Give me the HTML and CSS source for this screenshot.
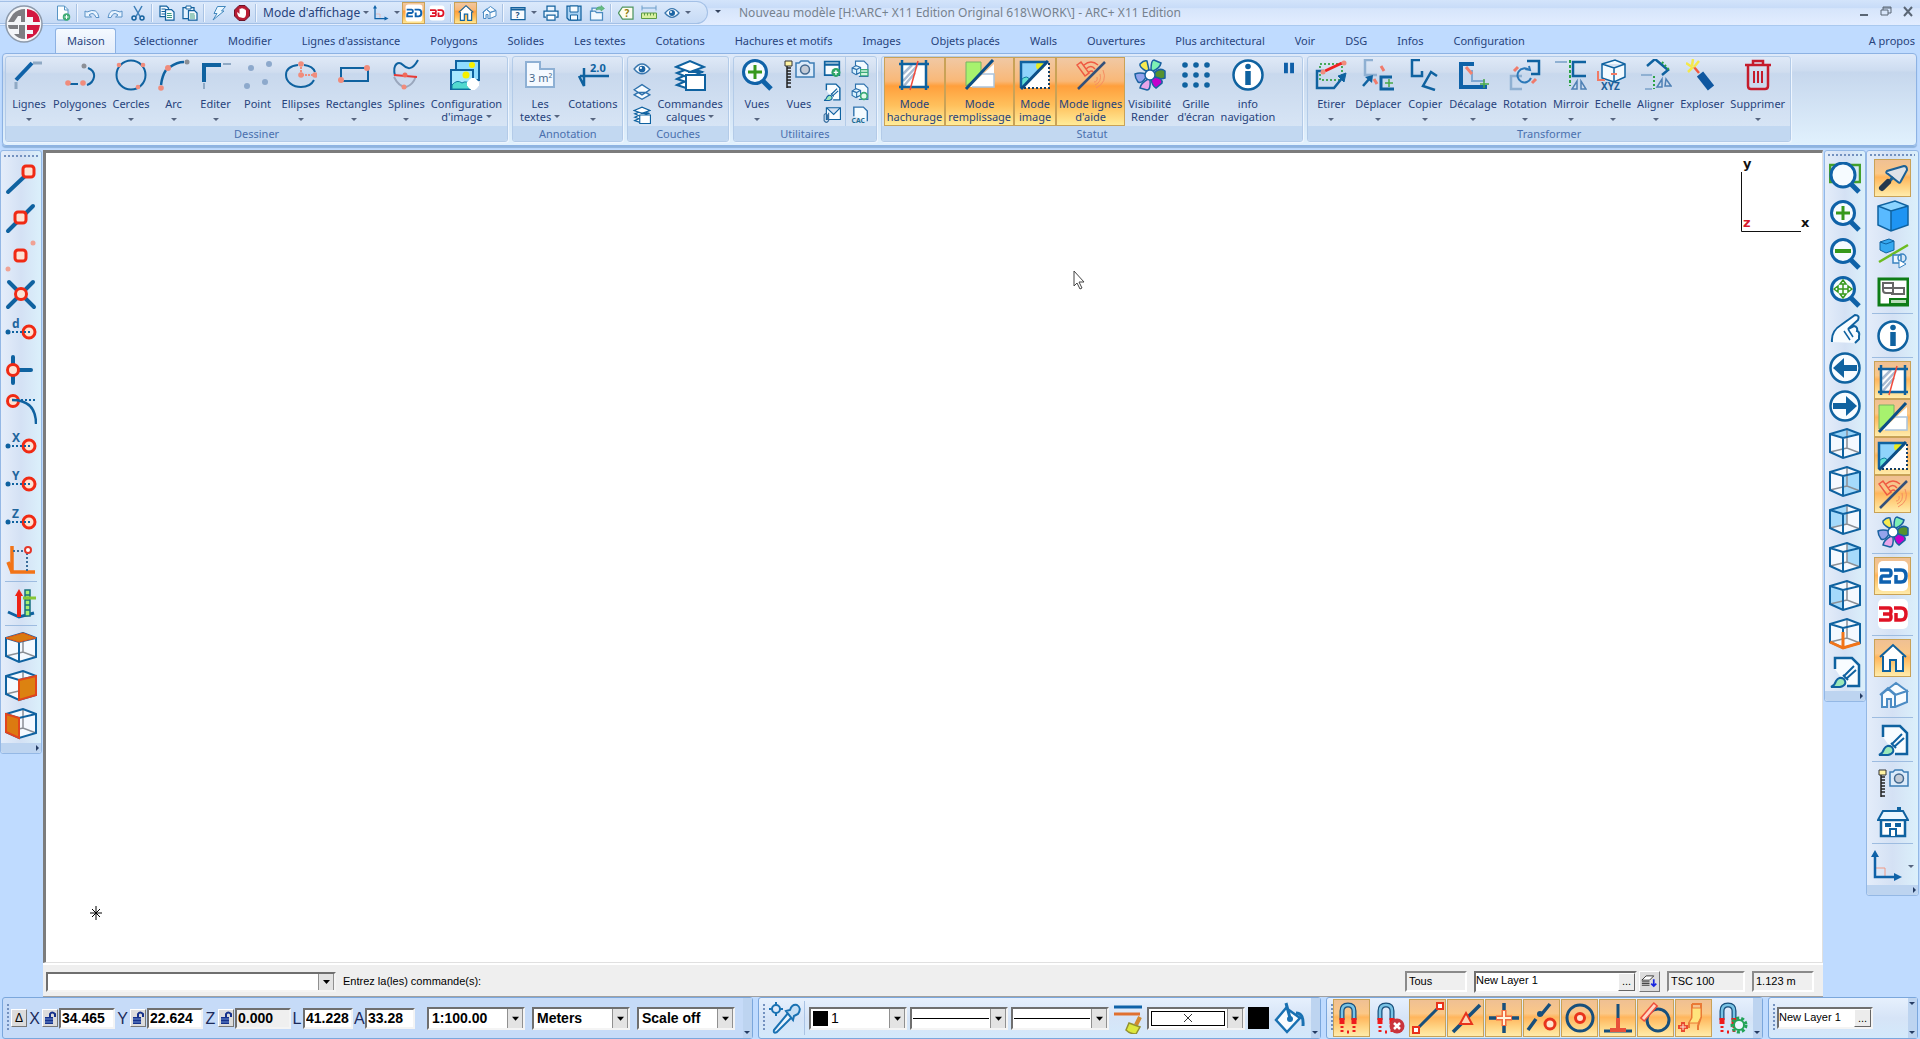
FILE: index.html
```html
<!DOCTYPE html>
<html lang="fr">
<head>
<meta charset="utf-8">
<title>Nouveau modèle - ARC+ X11 Edition</title>
<link rel="stylesheet" href="styles.css">
</head>
<body>
<svg class="sprite" aria-hidden="true">
  <!-- drawing -->
  <symbol id="i-line" viewBox="0 0 32 32"><path d="M3 21 19 4" stroke="#0f62a8" stroke-width="4"/><path d="M20 4h9M3 23v7" stroke="#8fa9c4" stroke-width="3"/></symbol>
  <symbol id="i-poly" viewBox="0 0 32 32"><path d="M6 25h8m10-16q7 3 6 9t-7 8" stroke="#0f62a0" stroke-width="2"/><circle cx="20" cy="7" r="2.500" fill="#8b8f96"/><g fill="#f08c7c"><circle cx="4" cy="24" r="2.800"/><circle cx="19" cy="24" r="2.800"/></g></symbol>
  <symbol id="i-circle" viewBox="0 0 32 32"><circle cx="16" cy="16" r="14.500" stroke="#0f62a0" stroke-width="2"/><g fill="#f08c7c"><circle cx="4" cy="6" r="2.300"/><circle cx="28" cy="6" r="2.300"/><circle cx="23" cy="28" r="2.300"/></g></symbol>
  <symbol id="i-arc" viewBox="0 0 32 32"><path d="M3 26q1-9 5-15m4-3q7-5 14-5" stroke="#0f62a0" stroke-width="2.500"/><circle cx="29" cy="3" r="2.500" fill="#8b8f96"/><g fill="#f08c7c"><circle cx="3" cy="29" r="2.800"/><circle cx="10" cy="9" r="3"/></g></symbol>
  <symbol id="i-edit" viewBox="0 0 32 32"><path d="M4 23V6h17" stroke="#0f62a0" stroke-width="4"/><path d="M23 5h8M4 24v6" stroke="#8fa9c4" stroke-width="2"/></symbol>
  <symbol id="i-point" viewBox="0 0 32 32"><g fill="#8da9cc"><circle cx="9" cy="9" r="3"/><circle cx="27" cy="5" r="3"/><circle cx="5" cy="27" r="3"/><circle cx="23" cy="23" r="3"/></g></symbol>
  <symbol id="i-ellipse" viewBox="0 0 32 32"><path d="M13 6C5 7 1 11 1 16c0 7 7 12 15 12 6 0 11-3 13-7M19 6q9 1 11 7" stroke="#0f62a0" stroke-width="2"/><path d="M16 5v11h13" stroke="#f08c7c" stroke-width="2" stroke-dasharray="2 1"/><g fill="#f08c7c"><circle cx="16" cy="5" r="2.800"/><circle cx="16" cy="16" r="2.800"/><circle cx="30" cy="16" r="2.800"/></g></symbol>
  <symbol id="i-rect" viewBox="0 0 32 32"><path d="M3 9h27v13H3z" stroke="#0f62a0" stroke-width="2"/><g fill="#f08c7c"><circle cx="29" cy="9" r="3"/><circle cx="3" cy="21" r="3"/></g></symbol>
  <symbol id="i-spline" viewBox="0 0 32 32"><path d="M5 17C2 4 9 2 13 6s9 6 15-5" stroke="#0f62a0" stroke-width="2"/><path d="M4 18q5 10 12 10 7-2 10-11" stroke="#9aa7bd" stroke-width="2"/><path d="M4 16l23 2" stroke="#e83a35" stroke-width="2"/><circle cx="15" cy="16" r="2.500" fill="#f06a5a"/><circle cx="14" cy="28" r="2.500" fill="#f08c7c"/></symbol>
  <symbol id="i-image" viewBox="0 0 32 32"><path d="M6 2h23v19H6z" fill="#8fdcff" stroke="#0f62a0" stroke-width="2"/><circle cx="22" cy="6" r="3" fill="#f6f000"/><path d="M1 11h22v19H1z" fill="#a6e8ff" stroke="#0f62a0" stroke-width="2"/><circle cx="16" cy="16" r="3.500" fill="#f6f000"/><path d="M2 26q5-6 10-2 4-3 10 2v4H2z" fill="#52d9cf" stroke="#0f7ca0"/><path d="M23 19v12M17 25h12M19 21l8 8m0-8-8 8" stroke="#fff" stroke-width="4"/></symbol>
  <!-- annotation and layers -->
  <symbol id="i-area" viewBox="0 0 32 32"><path d="M2 3h14v7h14v18H2z" fill="#f4f9ff" stroke="#8eb0d4" stroke-width="2"/><text x="5" y="23" font-size="11" fill="#49698d" stroke="none">3 m²</text></symbol>
  <symbol id="i-dim" viewBox="0 0 32 32"><path d="M3 17h29M7 9v18L2 17M7 27V17" stroke="#0f62a0" stroke-width="2.500"/><text x="13" y="13" font-size="11" font-weight="bold" fill="#0f62a0" stroke="none">2.0</text></symbol>
  <symbol id="i-layers" viewBox="0 0 32 32"><g fill="#fff" stroke="#0f62a0" stroke-width="2"><path d="M3 26l13-6 13 5-14 5z"/><path d="M3 20l13-6 12 5-13 5z"/><path d="M3 14l13-5 12 4-13 6z"/><path d="M2 8 16 2l14 6-14 5z"/><path d="M12 16h19v15H12z"/><path d="M14 13h15" /></g></symbol>
  <symbol id="i-eye" viewBox="0 0 32 32"><path d="M2 16q14-18 28 0-14 17-28 0z" fill="#f6fbff" stroke="#3a77ae" stroke-width="2.500"/><circle cx="16" cy="16" r="6" fill="#1c64a4"/><circle cx="14" cy="14" r="2" fill="#fff"/></symbol>
  <symbol id="i-layer2" viewBox="0 0 32 32"><path d="M2 21l7-4h14l7 4-14 8zM2 12l14-9 14 9-14 9z" fill="#f6fbff" stroke="#2f72ad" stroke-width="2.500"/></symbol>
  <symbol id="i-brushpage" viewBox="0 0 32 32"><path d="M6 13V2h17l7 7v21H18" fill="#f8fcff" stroke="#0f62a0" stroke-width="2.500"/><path d="M15 20 25 10m-8 13 10-9M14 19l5 5" stroke="#0f62a0" stroke-width="2"/><path d="M2 31q4-2 5-6 3-5 8-2 4 6-4 8z" fill="#9be8b8" stroke="#0f62a0" stroke-width="2"/></symbol>
  <symbol id="i-zin" viewBox="0 0 32 32"><path d="M21 21l9 9" stroke="#0f62a8" stroke-width="5"/><circle cx="14" cy="13" r="11.500" fill="#f6fbff" stroke="#0f62a8" stroke-width="3"/><path d="M7 13h14M14 6v14" stroke="#36981c" stroke-width="3"/></symbol>
  <symbol id="i-zout" viewBox="0 0 32 32"><path d="M21 21l9 9" stroke="#0f62a8" stroke-width="5"/><circle cx="14" cy="13" r="11.500" fill="#f6fbff" stroke="#0f62a8" stroke-width="3"/><path d="M6 13h16" stroke="#36981c" stroke-width="4"/></symbol>
  <symbol id="i-zwin" viewBox="0 0 32 32"><path d="M1 3h30v17H1z" stroke="#42a02c" stroke-width="2.500"/><path d="M21 21l9 9" stroke="#0f62a8" stroke-width="5"/><circle cx="14" cy="13" r="12" fill="#f6fbff" stroke="#0f62a8" stroke-width="3"/></symbol>
  <symbol id="i-zall" viewBox="0 0 32 32"><path d="M21 21l9 9" stroke="#0f62a8" stroke-width="5"/><circle cx="14" cy="13" r="11.500" fill="#f6fbff" stroke="#0f62a8" stroke-width="3"/><path d="M14 4l3 4h-6zM14 22l3-4h-6zM5 13l4-3v6zM23 13l-4-3v6zM14 8v10M9 13h10" stroke="#36981c" stroke-width="1.500"/></symbol>
  <symbol id="i-cam" viewBox="0 0 32 32"><path d="M4 7v22M4 9h4M4 12h4M4 15h4M4 18h4M4 21h4M4 24h4M4 28h4" stroke="#222" stroke-width="1.500"/><path d="M2 2h7v5H2z" fill="#fff3a2" stroke="#333"/><path d="M13 4h3l2-2h7l2 2h4v14H13z" fill="#dcebfa" stroke="#3d7db5" stroke-width="1.500"/><circle cx="22" cy="10.500" r="4.500" fill="#c3cbd6" stroke="#44698f" stroke-width="1.500"/></symbol>
  <symbol id="i-winadd" viewBox="0 0 32 32"><path d="M3 3h26v24H3z" fill="#f8fcff" stroke="#0f62a0" stroke-width="3"/><path d="M3 8h26" stroke="#0f62a0" stroke-width="4"/><circle cx="23" cy="22" r="8" fill="#2ba465"/><path d="M23 18v8m-4-4h8" stroke="#fff" stroke-width="2.500"/></symbol>
  <symbol id="i-mail" viewBox="0 0 32 32"><path d="M6 3h25v21H6zM6 3l13 12L31 3" fill="#f8fcff" stroke="#0f62a0" stroke-width="2"/><path d="M10 12v14q-4 6-8 0V16q3-5 6 0v9" stroke="#3a6f9f" stroke-width="2"/></symbol>
  <symbol id="i-cubedoc" viewBox="0 0 32 32"><path d="M8 12V2h15l7 7v20H14" fill="#f3fbff" stroke="#2f72ad" stroke-width="2"/><path d="M2 14l7-4 8 3v9l-8 4-7-4zM2 14l8 3 7-4M10 17v9" fill="#d9f2ff" stroke="#2f72ad" stroke-width="2"/><path d="M17 17h13v11H17zM17 22h13" fill="#d4f5df" stroke="#3cab7a" stroke-width="2"/></symbol>
  <symbol id="i-cubegear" viewBox="0 0 32 32"><path d="M8 12V2h15l7 7v20H14" fill="#f3fbff" stroke="#2f72ad" stroke-width="2"/><path d="M2 14l7-4 8 3v9l-8 4-7-4zM2 14l8 3 7-4M10 17v9" fill="#d9f2ff" stroke="#2f72ad" stroke-width="2"/><circle cx="23" cy="23" r="6" fill="#e4f9ec" stroke="#3cab7a" stroke-width="3"/></symbol>
  <symbol id="i-cac" viewBox="0 0 32 32"><path d="M5 18V2h17l7 7v18" fill="#f3fbff" stroke="#2f72ad" stroke-width="2.500"/><text x="1" y="30" font-size="12" font-weight="bold" fill="#1f6c93" stroke="none">CAC</text></symbol>
  <!-- display states -->
  <symbol id="i-hatch" viewBox="0 0 32 32"><path d="M4 5h24v23H4z" fill="#fff"/><path d="M5 15 14 6M5 22 19 7M5 28 17 14" stroke="#a9bbd2" stroke-width="2.500"/><path d="M4 1v30M28 1v30M1 5h30M1 28h30" stroke="#0f62a0" stroke-width="2.500"/><path d="M20 2 12 31" stroke="#f04a3c" stroke-width="1.500"/></symbol>
  <symbol id="i-fill" viewBox="0 0 32 32"><path d="M2 3h15v12L2 27z" fill="#a7f26e" stroke="#77b264"/><path d="M30 5v23H5z" fill="#fff"/><path d="M15 15h15v13H8" stroke="#aac4dd" stroke-width="1.500"/><path d="M2 30 29 1" stroke="#0b4f88" stroke-width="3"/></symbol>
  <symbol id="i-imgmode" viewBox="0 0 32 32"><path d="M2 3h26L2 29z" fill="#8fd4fb"/><path d="M30 3v26H4z" fill="#fff"/><circle cx="21" cy="7" r="4" fill="#e8ec22"/><path d="M2 21q6-6 9 0l-9 8z" fill="#63e2d4" stroke="#0f7ca0"/><path d="M28 3H2v26" stroke="#0f62a0" stroke-width="2.500"/><path d="M30 4v25H4" stroke="#123f66" stroke-width="2" stroke-dasharray="2 2"/><path d="M2 30 29 2" stroke="#0b4f88" stroke-width="3"/></symbol>
  <symbol id="i-guide" viewBox="0 0 32 32"><g stroke="#ef5a42" stroke-width="1.500"><path d="M2 6l4-3 8 11-4 3zM9 6q7-6 14 0M11 10q5-5 9 0M14 13q3-2 4 0"/></g><g stroke="#f58d61"><path d="M28 11q5 12-7 18M25 15q2 8-5 11M22 18q1 5-3 5"/></g><path d="M3 30 30 3" stroke="#33507a" stroke-width="2.500"/></symbol>
  <symbol id="i-fan" viewBox="0 0 32 32"><g stroke="#1a62a0" stroke-width="1.500"><path d="M12 12Q5 8 6 5q4-4 7-3l2 9z" fill="#f7ea50"/><path d="M17 11q0-10 3-10l7 3q-1 5-8 8z" fill="#7df0b4"/><path d="M20 14q6-6 11-2v7q-5 2-11-2z" fill="#56922e"/><path d="M20 18q9 1 8 6l-6 5q-4-2-5-9z" fill="#c400cc"/><path d="M16 20q1 11-3 11l-7-2q1-5 8-9z" fill="#e8a5e8"/><path d="M12 18q-4 7-8 5-3-4-3-8 5-2 11 0z" fill="#93a3ec"/><circle cx="16" cy="16" r="5" fill="#fff"/></g></symbol>
  <symbol id="i-grid" viewBox="0 0 32 32"><g fill="#0f62a0"><circle cx="5" cy="6" r="2.800"/><circle cx="16" cy="6" r="2.800"/><circle cx="27" cy="6" r="2.800"/><circle cx="5" cy="16" r="2.800"/><circle cx="16" cy="16" r="2.800"/><circle cx="27" cy="16" r="2.800"/><circle cx="5" cy="26" r="2.800"/><circle cx="16" cy="26" r="2.800"/><circle cx="27" cy="26" r="2.800"/></g></symbol>
  <symbol id="i-info" viewBox="0 0 32 32"><circle cx="16" cy="16" r="14.500" fill="#fff" stroke="#0f62a0" stroke-width="2.500"/><circle cx="16" cy="7.500" r="2.800" fill="#0f62a0"/><path d="M16 12v14" stroke="#0f62a0" stroke-width="5.500"/></symbol>
  <symbol id="i-pause" viewBox="0 0 32 32"><path d="M9 4v24M23 4v24" stroke="#0f5fa8" stroke-width="9"/></symbol>
  <!-- transforms -->
  <symbol id="i-stretch" viewBox="0 0 32 32"><path d="M5 5h22v16H5z" stroke="#48a95c" stroke-width="2" stroke-dasharray="2 2"/><path d="M9 12H2v17h17l9-11" stroke="#0f62a0" stroke-width="2.500"/><path d="M31 14l-2 9-6-6z" fill="#0f62a0" stroke="#0f62a0"/><path d="M10 12 27 4" stroke="#f02020" stroke-width="3"/><g fill="#f08c7c"><circle cx="8" cy="13" r="2.500"/><circle cx="29" cy="4" r="2.500"/></g></symbol>
  <symbol id="i-move" viewBox="0 0 32 32"><path d="M11 1H3v15h12" stroke="#8fb0d2" stroke-width="2.500"/><path d="M30 18H19v12h13" stroke="#0f62a0" stroke-width="3"/><path d="M1 27l7-8" stroke="#0f62a0" stroke-width="2.500"/><path d="M3 18l8-2-1 8z" fill="#0f62a0"/><path d="M19 7l3 5M12 20l3 5" stroke="#f07b6c" stroke-width="3"/><path d="M27 20v8m-4-4h8" stroke="#48a948" stroke-width="1.500"/></symbol>
  <symbol id="i-copy2" viewBox="0 0 32 32"><path d="M11 1H3v16h10v-5M28 17l-6-4-8 14 12 4" stroke="#0f62a0" stroke-width="2.500"/></symbol>
  <symbol id="i-offset" viewBox="0 0 32 32"><path d="M17 5H4v23h26" stroke="#0f62a8" stroke-width="4"/><path d="M15 11v11h13" stroke="#7fa7d2" stroke-width="2"/><path d="M9 8l6 7" stroke="#f3826f" stroke-width="3"/><path d="M27 20v9m-4-4h9" stroke="#48a948" stroke-width="1.500"/></symbol>
  <symbol id="i-rotate" viewBox="0 0 32 32"><path d="M18 2h12v13h-8" stroke="#0f62a0" stroke-width="2.500"/><path d="M13 17H2v13h11" stroke="#8fb0d2" stroke-width="2.500"/><path d="M20 11a7 7 0 1 0 2 8M16 10l5 1-1-4" stroke="#2b78b8" stroke-width="2"/><path d="M9 8 5 12M27 20l-4 4" stroke="#f07b6c" stroke-width="3"/></symbol>
  <symbol id="i-mirror" viewBox="0 0 32 32"><path d="M0 3h12" stroke="#8fb0d2" stroke-width="2"/><path d="M31 3H18v14h13" stroke="#0f62a0" stroke-width="2.500"/><path d="M15 1v26" stroke="#2ba443" stroke-width="2" stroke-dasharray="3 2"/><path d="M22 22v8h-5zM26 22v8h5z" stroke="#4f81b5" stroke-width="1.500"/></symbol>
  <symbol id="i-scale" viewBox="0 0 32 32"><path d="M5 5l13-4 10 4v13l-11 5-12-4zM5 5l12 4 11-4M17 9v14" fill="#f3faff" stroke="#0f62a0" stroke-width="1.500"/><path d="M1 12v9h7M14 15h6" stroke="#f17a65" stroke-width="2"/><text x="4" y="31" font-size="10" font-weight="bold" fill="#1d5f99" stroke="none">XYZ</text></symbol>
  <symbol id="i-align" viewBox="0 0 32 32"><path d="M7 7l8-7 13 11-6 5" stroke="#0f62a0" stroke-width="2.500"/><path d="M1 16h11M12 30H5" stroke="#8fb0d2" stroke-width="2"/><path d="M22 3l8 9M14 17v13" stroke="#2ba443" stroke-width="2" stroke-dasharray="2 2"/><path d="M22 20v8h-5zM26 20l-1 7h6z" stroke="#4f81b5" stroke-width="1.500"/></symbol>
  <symbol id="i-explode" viewBox="0 0 32 32"><path d="M14 15 25 29" stroke="#0f57a0" stroke-width="8"/><path d="M8 8l5 6" stroke="#f2573e" stroke-width="2.500"/><path d="M7 0l-1 7M0 4l6 4M13 2 8 8M2 13l5-5" stroke="#f4e84a" stroke-width="2.500"/></symbol>
  <symbol id="i-trash" viewBox="0 0 32 32"><path d="M3 6h26M11 5V2h10v3M6 7v20q0 3 3 3h14q3 0 3-3V7" stroke="#c51c2c" stroke-width="2.500"/><path d="M12 12v12M16 12v12M20 12v12" stroke="#c51c2c" stroke-width="2"/></symbol>
  <!-- snaps -->
  <symbol id="i-endpt" viewBox="0 0 32 32"><path d="M3 28 20 12" stroke="#0f62a0" stroke-width="4" stroke-linecap="round"/><rect x="18" y="2" width="11" height="11" rx="3" fill="#fde3d4" stroke="#f02a14" stroke-width="3"/></symbol>
  <symbol id="i-midpt" viewBox="0 0 32 32"><path d="M3 29 28 4" stroke="#0f62a0" stroke-width="4" stroke-linecap="round"/><rect x="10" y="10" width="11" height="11" rx="3" fill="#fde3d4" stroke="#f02a14" stroke-width="3"/></symbol>
  <symbol id="i-between" viewBox="0 0 32 32"><g fill="#f0a294"><circle cx="28" cy="3" r="2.500"/><circle cx="3" cy="29" r="2.500"/></g><rect x="10" y="10" width="11" height="11" rx="3" fill="#fde3d4" stroke="#f02a14" stroke-width="3"/></symbol>
  <symbol id="i-cross" viewBox="0 0 32 32"><path d="M3 29 28 4M4 4l25 25" stroke="#0f62a0" stroke-width="4" stroke-linecap="round"/><circle cx="16" cy="16" r="5.500" fill="#fde3d4" stroke="#f02a14" stroke-width="3"/></symbol>
  <symbol id="i-dot" viewBox="0 0 32 32"><circle cx="3" cy="16" r="2.500" fill="#0f62a0"/><circle cx="24" cy="16" r="6" fill="#fde3d4" stroke="#f02a14" stroke-width="3"/><path d="M7 16h18" stroke="#0f62a0" stroke-width="2" stroke-dasharray="2 2"/></symbol>
  <symbol id="i-tee" viewBox="0 0 32 32"><path d="M8 3v26M8 16h18" stroke="#0f62a0" stroke-width="4" stroke-linecap="round"/><circle cx="8" cy="16" r="5.500" fill="#fde3d4" stroke="#f02a14" stroke-width="3"/></symbol>
  <symbol id="i-tanarc" viewBox="0 0 32 32"><circle cx="8" cy="9" r="5.500" fill="#fde3d4" stroke="#f02a14" stroke-width="3"/><path d="M7 8q24 0 24 24" stroke="#0f62a0" stroke-width="2.500"/><path d="M8 8h22" stroke="#0f62a0" stroke-width="2" stroke-dasharray="2 2"/></symbol>
  <symbol id="i-axis" viewBox="0 0 32 32"><path d="M7 2v26h23M7 28 3 18" stroke="#f27418" stroke-width="3.500"/><path d="M8 7h14v20" stroke="#3c6d9b" stroke-width="2" stroke-dasharray="2 2"/><circle cx="23" cy="6" r="3" fill="#fff" stroke="#e4372a" stroke-width="2"/></symbol>
  <symbol id="i-height" viewBox="0 0 32 32"><path d="M3 24l11 5 15-4" stroke="#0f62a0" stroke-width="3"/><path d="M14 29V6" stroke="#ee2216" stroke-width="4"/><path d="M14 1l4 7h-8z" fill="#ee2216"/><path d="M20 2h5v26h-5zM20 7h5m-5 5h5m-5 5h5m-5 5h5" fill="#a9ee70" stroke="#17707f" stroke-width="1.500"/><path d="M18 10h13" stroke="#86c735" stroke-width="3"/></symbol>
  <!-- cubes: frame plus one tinted face -->
  <symbol id="i-cube" viewBox="0 0 32 32"><path d="M18 1v19M1 24l17-4 13 5" stroke="#8a8f96" stroke-width="1.500"/><path d="M1 6v18l13 6 17-5V6M1 6l13 4 17-4L18 1zM14 10v20" stroke="#0f62a0" stroke-width="2"/></symbol>
  <symbol id="i-cubewhite" viewBox="0 0 32 32"><path d="M1 6 18 1l13 5v19l-17 5-13-6z" fill="#f4f9ff"/></symbol>
  <symbol id="i-ctopo" viewBox="0 0 32 32"><use href="#i-cubewhite"/><use href="#i-cube"/><path d="M1 6l13 4 17-4L18 1z" fill="#d97a10" stroke="#e2551d"/></symbol>
  <symbol id="i-cfronto" viewBox="0 0 32 32"><use href="#i-cubewhite"/><use href="#i-cube"/><path d="M14 10l17-4v19l-17 5z" fill="#dc8211" stroke="#e2451d" stroke-width="2"/></symbol>
  <symbol id="i-clefto" viewBox="0 0 32 32"><use href="#i-cubewhite"/><use href="#i-cube"/><path d="M1 6l13 4v20L1 24z" fill="#dc7a11" stroke="#e2451d" stroke-width="2"/></symbol>
  <symbol id="i-ctop" viewBox="0 0 32 32"><use href="#i-cubewhite"/><path d="M1 6l13 4 17-4L18 1z" fill="#9bd6fa"/><use href="#i-cube"/></symbol>
  <symbol id="i-cfront" viewBox="0 0 32 32"><use href="#i-cubewhite"/><path d="M14 10l17-4v19l-17 5z" fill="#a5dafb"/><use href="#i-cube"/></symbol>
  <symbol id="i-cback" viewBox="0 0 32 32"><use href="#i-cubewhite"/><path d="M1 6l17-5v19L1 24z" fill="#a5dafb"/><use href="#i-cube"/></symbol>
  <symbol id="i-cright" viewBox="0 0 32 32"><use href="#i-cubewhite"/><path d="M18 1l13 5v19l-13-5z" fill="#a5dafb"/><use href="#i-cube"/></symbol>
  <symbol id="i-cleft" viewBox="0 0 32 32"><use href="#i-cubewhite"/><path d="M1 6l13 4v20L1 24z" fill="#a5dafb"/><use href="#i-cube"/></symbol>
  <symbol id="i-caxis" viewBox="0 0 32 32"><use href="#i-cubewhite"/><use href="#i-cube"/><path d="M1 24l13 6 17-5M14 30V14" stroke="#f27418" stroke-width="3"/></symbol>
  <symbol id="i-hand" viewBox="0 0 32 32"><path d="M3 28Q2 17 12 11L26 1q5 0 3 5L19 15l6-3q4 1 3 5 3 1 2 5v3l-4 4" fill="#f8fcff" stroke="#0f62a0" stroke-width="2"/><path d="M19 15l5 8M15 17l6 9" stroke="#0f62a0" stroke-width="1.500"/></symbol>
  <symbol id="i-back" viewBox="0 0 32 32"><circle cx="16" cy="16" r="14.500" fill="#f8fcff" stroke="#0f62a0" stroke-width="2.500"/><path d="M12 16h16" stroke="#0f62a0" stroke-width="6"/><path d="M4 16 15 6v20z" fill="#0f62a0"/></symbol>
  <symbol id="i-fwd" viewBox="0 0 32 32"><circle cx="16" cy="16" r="14.500" fill="#f8fcff" stroke="#0f62a0" stroke-width="2.500"/><path d="M4 16h16" stroke="#0f62a0" stroke-width="6"/><path d="M28 16 17 6v20z" fill="#0f62a0"/></symbol>
  <symbol id="i-trowel" viewBox="0 0 32 32"><path d="M27 4 10 9q-2 2 1 3l10 8q2 2 3-1l6-11q0-4-3-4z" fill="#dfe2e8" stroke="#1d6196" stroke-width="2"/><path d="M16 15l-4 5" stroke="#1d6196" stroke-width="3"/><path d="M11 20l-6 6" stroke="#24384e" stroke-width="6" stroke-linecap="round"/></symbol>
  <symbol id="i-solid" viewBox="0 0 32 32"><path d="M1 6 18 1l13 5-17 5z" fill="#8bd4ff"/><path d="M1 6l13 5v20L1 25z" fill="#59baff"/><path d="M14 11l17-5v19l-17 6z" fill="#1e94f3"/><path d="M1 6v19l13 6 17-6V6L18 1zM1 6l13 5 17-5M14 11v20" stroke="#0f62a0" stroke-width="1.500"/></symbol>
  <symbol id="i-mixed" viewBox="0 0 32 32"><path d="M3 4l9-3 5 2v9l-8 3-6-3z" fill="#36a9f0" stroke="#0f62a0"/><path d="M3 4l6 2 8-3" stroke="#0f62a0"/><path d="M2 24 31 7" stroke="#6cbc20" stroke-width="2.500"/><path d="M16 17h8v8h-8z" fill="#eef7ff" stroke="#3a83c0" stroke-width="1.500"/><circle cx="25" cy="20" r="4" stroke="#3a83c0" stroke-width="1.500"/><path d="M22 22l7 4-7 4z" fill="#fff" stroke="#3a83c0"/></symbol>
  <symbol id="i-viewport" viewBox="0 0 32 32"><path d="M2 3h29v26H2z" fill="#fff" stroke="#0e7c16" stroke-width="3"/><path d="M6 7h10v10H9q-3 0-3-3zM6 12h21v6H14" stroke="#666" stroke-width="2"/><path d="M13 23h17v5H13z" fill="#b8dcb8" stroke="#0e7c16" stroke-width="2"/></symbol>
  <symbol id="i-2d" viewBox="0 0 32 32"><rect x="1" y="1" width="30" height="30" rx="5" fill="#fff"/><path d="M3 10h9q2 0 2 3t-2 3H6q-2 0-2 3v3h10M19 15v7h5q5 0 5-6t-5-6h-7" stroke="#0f62b0" stroke-width="3.500"/></symbol>
  <symbol id="i-3d" viewBox="0 0 32 32"><rect x="1" y="1" width="30" height="30" rx="5" fill="#fff"/><path d="M2 10h10q2 0 2 3t-2 3H6m6 0q2 0 2 3t-2 3H2M19 15v7h5q5 0 5-6t-5-6h-7" stroke="#e01224" stroke-width="3.500"/></symbol>
  <symbol id="i-home" viewBox="0 0 32 32"><path d="M6 14v15h7V19h6v10h7V14L16 4z" fill="#fff"/><path d="M3 15 16 3l13 12M6 14v15h7V18h6v11h7V14" stroke="#0f62a0" stroke-width="2"/></symbol>
  <symbol id="i-home2" viewBox="0 0 32 32"><path d="M5 14v13h5v-8h4v8h4V15l-7-6zM18 15l12-4v11l-12 5M11 9l8-6 11 8-12 4" fill="#f8fcff" stroke="#4c8cc4" stroke-width="2"/><path d="M3 15l8-7 8 7" stroke="#4c8cc4" stroke-width="2"/></symbol>
  <symbol id="i-house" viewBox="0 0 32 32"><path d="M20 1h4v5h-4z" fill="#0f62a0"/><path d="M4 14h24v16H4z" fill="#fff" stroke="#0f62a0" stroke-width="2.500"/><path d="M6 5h20l5 9H1z" fill="#eaf6ff" stroke="#0f62a0" stroke-width="2"/><path d="M8 19h6M18 19h6" stroke="#0f62a0" stroke-width="4"/><path d="M13 30v-7h6v7" fill="#fff" stroke="#0f62a0" stroke-width="2"/></symbol>
  <symbol id="i-ucs" viewBox="0 0 32 32"><path d="M5 18h9v9" stroke="#f09a86"/><path d="M4 6v21h20" stroke="#0f62a8" stroke-width="2.500"/><path d="M4 0l4 7H0zM31 27l-8-4v8z" fill="#0f62a8"/></symbol>
  <!-- quick access -->
  <symbol id="i-new" viewBox="0 0 32 32"><path d="M5 2h14l7 7v21H5z" fill="#fbfeff" stroke="#5794c4" stroke-width="2"/><path d="M19 2v8h7" stroke="#5794c4" stroke-width="2"/><circle cx="23" cy="24" r="7.500" fill="#41ad77"/><path d="M23 20v8m-4-4h8" stroke="#fff" stroke-width="2"/></symbol>
  <symbol id="i-undo" viewBox="0 0 32 32"><path d="M2 12v12h13l-5-4q9-8 14 5h6Q27 4 6 14z" fill="#e9f4ff" stroke="#5b92c6" stroke-width="2"/></symbol>
  <symbol id="i-redo" viewBox="0 0 32 32"><path d="M30 12v12H17l5-4q-9-8-14 5H2Q5 4 26 14z" fill="#e9f4ff" stroke="#5b92c6" stroke-width="2"/></symbol>
  <symbol id="i-cut" viewBox="0 0 32 32"><path d="M8 2l12 21M24 2 12 23" stroke="#3a7cb6" stroke-width="3"/><circle cx="8" cy="26" r="4" stroke="#14629e" stroke-width="3"/><circle cx="24" cy="26" r="4" stroke="#14629e" stroke-width="3"/></symbol>
  <symbol id="i-copy" viewBox="0 0 32 32"><path d="M2 2h13l4 4v17H2z" fill="#f8fcff" stroke="#14629e" stroke-width="2.500"/><path d="M5 8h8M5 13h8M5 18h8" stroke="#14629e" stroke-width="2"/><path d="M13 9h12l5 5v16H13z" fill="#f8fcff" stroke="#14629e" stroke-width="2.500"/><path d="M16 17h9M16 21h10M16 25h10" stroke="#3c9c80" stroke-width="2"/></symbol>
  <symbol id="i-paste" viewBox="0 0 32 32"><path d="M2 5h22v22H2z" fill="#e5f2ff" stroke="#14629e" stroke-width="2.500"/><path d="M8 2h10v6H8z" fill="#fff" stroke="#14629e" stroke-width="2"/><path d="M13 11h12l5 5v14H13z" fill="#f8fcff" stroke="#14629e" stroke-width="2.500"/><path d="M16 18h9M16 22h10M16 26h10" stroke="#3c9c80" stroke-width="2"/></symbol>
  <symbol id="i-bolt" viewBox="0 0 32 32"><path d="M13 3h16l-8 9h5L4 30l8-13H6z" fill="#eaf7ff" stroke="#4388be" stroke-width="2"/></symbol>
  <symbol id="i-stop" viewBox="0 0 32 32"><path d="M10 1h12l9 9v12l-9 9H10l-9-9V10z" fill="#b81c34" stroke="#6d1428" stroke-width="2"/><path d="M10 24q-5-7-3-10l4 4V9q0-3 3-1 2-4 4 0 3-2 3 1 3-1 3 3v7q-1 7-6 7z" fill="#fff"/></symbol>
  <symbol id="i-window" viewBox="0 0 32 32"><path d="M2 5h28v24H2z" fill="#f8fcff" stroke="#14629e" stroke-width="2.500"/><path d="M2 9h28" stroke="#14629e" stroke-width="4"/><text x="11" y="26" font-size="17" font-weight="bold" fill="#1a4f80" stroke="none">?</text></symbol>
  <symbol id="i-print" viewBox="0 0 32 32"><path d="M8 12V2h16v10M6 24H2V12h28v12h-4" fill="#eaf5ff" stroke="#14629e" stroke-width="2.500"/><path d="M8 20h16v10H8z" fill="#fff" stroke="#14629e" stroke-width="2.500"/></symbol>
  <symbol id="i-save" viewBox="0 0 32 32"><path d="M2 2h28v28H6l-4-4z" fill="#a9d2f4" stroke="#14629e" stroke-width="2.500"/><path d="M8 2h16v12H8zM9 20h14v10H9z" fill="#f8fcff" stroke="#14629e" stroke-width="2"/></symbol>
  <symbol id="i-open" viewBox="0 0 32 32"><path d="M6 14V6h12M3 12h9l3 3h12v15H3z" fill="#f0f8ff" stroke="#4c8bc0" stroke-width="2.500"/><path d="M14 10q2-8 10-6V1l7 6-7 5V9q-5-1-10 1z" fill="#67bd83" stroke="#3f9a60"/></symbol>
  <symbol id="i-tag" viewBox="0 0 32 32"><path d="M1 16 9 4h21v24H9z" fill="#fffdf0" stroke="#4f9560" stroke-width="2.500"/><text x="13" y="24" font-size="20" font-weight="bold" fill="#927d10" stroke="none">?</text></symbol>
  <symbol id="i-ruler" viewBox="0 0 32 32"><path d="M2 1v10M30 1v10M2 6h28" stroke="#6b9cc8" stroke-width="2"/><path d="M1 16h30v11H1z" fill="#d8f0a0" stroke="#5e9c45" stroke-width="2"/><path d="M7 16v5M13 16v5M19 16v5M25 16v5" stroke="#5e9c45" stroke-width="2"/></symbol>
  <!-- property bar -->
  <symbol id="i-dropper" viewBox="0 0 32 32"><circle cx="7" cy="7" r="4" stroke="#1971b2" stroke-width="2"/><path d="M7 0v3M7 11v3M0 7h3M11 7h3" stroke="#1971b2" stroke-width="2"/><path d="M20 10 5 28q-1 4 3 2L24 14" fill="#eaf5ff" stroke="#1971b2" stroke-width="2"/><path d="M17 9l4-1q2-6 7-5 5 3 1 9l-4 2-1 4z" fill="#c4def5" stroke="#1971b2" stroke-width="2"/></symbol>
  <symbol id="i-linebrush" viewBox="0 0 32 32"><path d="M2 5h28" stroke="#0f62a8" stroke-width="3"/><path d="M2 12h26" stroke="#e07030" stroke-width="3"/><path d="M28 15l-4 8" stroke="#d28a30" stroke-width="4"/><path d="M17 21l11 4-4 7q-6 0-10-4z" fill="#dde83c" stroke="#939130" stroke-width="1.500"/></symbol>
  <symbol id="i-bucket" viewBox="0 0 32 32"><path d="M12 6 2 18l11 12 13-14z" fill="#f8fcff" stroke="#1971b2" stroke-width="2.500"/><path d="M12 1l4 15M22 11q8 0 7 13" stroke="#1971b2" stroke-width="3"/><circle cx="16" cy="17" r="3" fill="#1971b2"/></symbol>
  <symbol id="i-magnet" viewBox="0 0 32 32"><path d="M6 18V9q0-6 6-6t6 6v9" stroke="#174f7c" stroke-width="5"/><path d="M6 18V9q0-6 6-6t6 6v9" stroke="#79c3e5" stroke-width="2.500"/><path d="M6 16v6M18 16v6" stroke="#ee1c1c" stroke-width="5"/><path d="M6 24v2M6 28v2M18 24v2M18 28v2M11 30h2" stroke="#ee1c1c" stroke-width="3"/></symbol>
  <symbol id="i-magoff" viewBox="0 0 32 32"><use href="#i-magnet"/><circle cx="23" cy="24" r="7.500" fill="#c9343c"/><path d="M20 21l6 6m0-6-6 6" stroke="#fff" stroke-width="2.500"/></symbol>
  <symbol id="i-maggear" viewBox="0 0 32 32"><use href="#i-magnet"/><circle cx="23" cy="23" r="7" stroke="#22a356" stroke-width="3" stroke-dasharray="3 2"/><circle cx="23" cy="23" r="5" fill="#eef7ff" stroke="#22a356" stroke-width="2"/></symbol>
  <symbol id="i-send" viewBox="0 0 32 32"><path d="M4 28 28 4" stroke="#174f7c" stroke-width="3"/><path d="M1 25h6v6H1zM25 1h6v6h-6z" fill="#fff" stroke="#e8331c" stroke-width="2"/></symbol>
  <symbol id="i-smid" viewBox="0 0 32 32"><path d="M3 30 30 3" stroke="#174f7c" stroke-width="3.500"/><path d="M16 11l6 11H10z" fill="#ffd4b4" stroke="#e8331c" stroke-width="2"/></symbol>
  <symbol id="i-sint" viewBox="0 0 32 32"><path d="M16 1v30M1 16h30" stroke="#174f7c" stroke-width="3.500"/><path d="M16 8v16M8 16h16" stroke="#f06a40" stroke-width="5"/><path d="M16 9v14M9 16h14" stroke="#fff1d8" stroke-width="2"/></symbol>
  <symbol id="i-snear" viewBox="0 0 32 32"><path d="M2 28 10 17M15 13l9-11" stroke="#174f7c" stroke-width="3.500"/><circle cx="14" cy="12" r="3" fill="#174f7c"/><circle cx="24" cy="22" r="5" fill="#ffe4ce" stroke="#e8331c" stroke-width="3"/></symbol>
  <symbol id="i-scen" viewBox="0 0 32 32"><circle cx="16" cy="16" r="13" stroke="#174f7c" stroke-width="3"/><circle cx="16" cy="16" r="4.500" fill="#ffe4ce" stroke="#e8331c" stroke-width="3"/></symbol>
  <symbol id="i-sperp" viewBox="0 0 32 32"><path d="M16 2v26M2 29h28" stroke="#174f7c" stroke-width="3"/><path d="M16 16v12M8 28h16" stroke="#e8503a" stroke-width="4"/></symbol>
  <symbol id="i-stan" viewBox="0 0 32 32"><circle cx="18" cy="18" r="11" stroke="#174f7c" stroke-width="3"/><path d="M2 18 16 2" stroke="#ef4d3a" stroke-width="6"/><path d="M3 17 15 3" stroke="#ffd6c2" stroke-width="3"/></symbol>
  <symbol id="i-schair" viewBox="0 0 32 32"><path d="M14 2h9v13l-3 9v4M14 2v14l-3 5v5" stroke="#ea7a36" stroke-width="2"/><path d="M14 6h9v9l-3 6h-9l3-5z" fill="#ffe47c" stroke="#ea7a36"/><path d="M5 20v10M0 25h10" stroke="#e84a30" stroke-width="4"/><path d="M5 22v6M2 25h6" stroke="#ffe4ce"/></symbol>
  <symbol id="i-lock" viewBox="0 0 14 14"><path d="M2 6h8v7H2z" fill="#16328c"/><path d="M2 8h8M2 11h8" stroke="#6f8fd0"/><path d="M7 6V3q2-3 5 0v3" stroke="#16328c" stroke-width="2"/></symbol>
  <symbol id="i-putlayer" viewBox="0 0 20 16"><path d="M1 7l5-5h9l-5 5zM1 9h9M1 11h9M1 13h9" fill="#fff" stroke="#222"/><path d="M15 6v7M12 11l3 3 3-3" stroke="#1726e0" stroke-width="2"/></symbol>
</svg>

<header class="titlebar">
  <div class="qat">
    <button class="logo" aria-label="Menu ARC+"><svg viewBox="0 0 38 38"><circle cx="19" cy="19" r="18" fill="#f4f6f9" stroke="#8d9aab" stroke-width="1.500"/><path d="M3 17 8 9q5-5 12-5v13h-4v-6h-3l-4 6zM3 20h10v4H5q-2-1-2-4zM14 20h6v14q-7 0-11-5h5z" fill="#7d7e82"/><path d="M22 4q9 1 12 8l1 5h-7v-5h-6zM35 20q-1 11-13 14v-5h6v-4h-6v-5z" fill="#d3173f"/></svg></button>
    <button aria-label="Nouveau"><svg><use href="#i-new"/></svg></button><i></i>
    <button aria-label="Annuler"><svg><use href="#i-undo"/></svg></button>
    <button aria-label="Rétablir"><svg><use href="#i-redo"/></svg></button>
    <button aria-label="Couper"><svg><use href="#i-cut"/></svg></button><i></i>
    <button aria-label="Copier"><svg><use href="#i-copy"/></svg></button>
    <button aria-label="Coller"><svg><use href="#i-paste"/></svg></button><i></i>
    <button aria-label="Exécuter"><svg><use href="#i-bolt"/></svg></button>
    <button aria-label="Arrêter"><svg><use href="#i-stop"/></svg></button><i></i>
    <button class="mode">Mode d'affichage<b class="caret"></b></button>
    <button aria-label="Repère"><svg><use href="#i-ucs"/></svg></button><button class="drop" aria-label="Options du repère"><b class="caret"></b></button>
    <button class="on" aria-label="2D"><svg><use href="#i-2d"/></svg></button>
    <button aria-label="3D"><svg><use href="#i-3d"/></svg></button><i></i>
    <button class="on" aria-label="Maison"><svg><use href="#i-home"/></svg></button>
    <button aria-label="Perspective"><svg><use href="#i-home2"/></svg></button><i></i>
    <button aria-label="Aide fenêtre"><svg><use href="#i-window"/></svg></button><button class="drop" aria-label="Options de fenêtre"><b class="caret"></b></button>
    <button aria-label="Imprimer"><svg><use href="#i-print"/></svg></button>
    <button aria-label="Enregistrer"><svg><use href="#i-save"/></svg></button>
    <button aria-label="Ouvrir"><svg><use href="#i-open"/></svg></button><i></i>
    <button aria-label="Info objet"><svg><use href="#i-tag"/></svg></button>
    <button aria-label="Mesurer"><svg><use href="#i-ruler"/></svg></button>
    <button aria-label="Visibilité"><svg><use href="#i-eye"/></svg></button><button class="drop" aria-label="Options de visibilité"><b class="caret"></b></button>
  </div>
  <h1>Nouveau modèle [H:\ARC+ X11 Edition Original 618\WORK\] - ARC+ X11 Edition</h1>
  <div class="winbtns">
    <button aria-label="Réduire"><svg viewBox="0 0 12 12"><path d="M2 10h8" stroke="#5a6675" stroke-width="2"/></svg></button>
    <button aria-label="Restaurer"><svg viewBox="0 0 12 12"><path d="M1 5h7v5H1zM3 5V2h8v6H8M3 3h8" stroke="#5a6675"/></svg></button>
    <button aria-label="Fermer"><svg viewBox="0 0 12 12"><path d="M2 2l8 9M10 2l-8 9" stroke="#5a6675" stroke-width="2"/></svg></button>
  </div>
</header>

<nav class="tabs">
  <a class="active" href="#">Maison</a><a href="#">Sélectionner</a><a href="#">Modifier</a><a href="#">Lignes d'assistance</a><a href="#">Polygons</a><a href="#">Solides</a><a href="#">Les textes</a><a href="#">Cotations</a><a href="#">Hachures et motifs</a><a href="#">Images</a><a href="#">Objets placés</a><a href="#">Walls</a><a href="#">Ouvertures</a><a href="#">Plus architectural</a><a href="#">Voir</a><a href="#">DSG</a><a href="#">Infos</a><a href="#">Configuration</a><a class="about" href="#">A propos</a>
</nav>

<section class="ribbon">
  <div class="group"><div class="cmds">
    <button><svg><use href="#i-line"/></svg>Lignes<b class="caret"></b></button>
    <button><svg><use href="#i-poly"/></svg>Polygones<b class="caret"></b></button>
    <button><svg><use href="#i-circle"/></svg>Cercles<b class="caret"></b></button>
    <button><svg><use href="#i-arc"/></svg>Arc<b class="caret"></b></button>
    <button><svg><use href="#i-edit"/></svg>Editer<b class="caret"></b></button>
    <button><svg><use href="#i-point"/></svg>Point</button>
    <button><svg><use href="#i-ellipse"/></svg>Ellipses<b class="caret"></b></button>
    <button><svg><use href="#i-rect"/></svg>Rectangles<b class="caret"></b></button>
    <button><svg><use href="#i-spline"/></svg>Splines<b class="caret"></b></button>
    <button><svg><use href="#i-image"/></svg>Configuration<span>d'image<b class="caret"></b></span></button>
  </div><h2>Dessiner</h2></div>
  <div class="group"><div class="cmds">
    <button class="wide"><svg><use href="#i-area"/></svg>Les<span>textes<b class="caret"></b></span></button>
    <button><svg><use href="#i-dim"/></svg>Cotations<b class="caret"></b></button>
  </div><h2>Annotation</h2></div>
  <div class="group"><div class="cmds">
    <div class="mini"><button aria-label="Voir calques"><svg><use href="#i-eye"/></svg></button><button aria-label="Calques"><svg><use href="#i-layer2"/></svg></button><button aria-label="Gestion des calques"><svg><use href="#i-layers"/></svg></button></div>
    <button><svg><use href="#i-layers"/></svg>Commandes<span>calques<b class="caret"></b></span></button>
  </div><h2>Couches</h2></div>
  <div class="group"><div class="cmds">
    <button><svg><use href="#i-zin"/></svg>Vues<b class="caret"></b></button>
    <button><svg><use href="#i-cam"/></svg>Vues</button>
    <div class="mini"><button aria-label="Nouvelle fenêtre"><svg><use href="#i-winadd"/></svg></button><button aria-label="Style"><svg><use href="#i-brushpage"/></svg></button><button aria-label="Envoyer"><svg><use href="#i-mail"/></svg></button></div>
    <div class="mini ruled"><button aria-label="Objet document"><svg><use href="#i-cubedoc"/></svg></button><button aria-label="Objet réglages"><svg><use href="#i-cubegear"/></svg></button><button aria-label="CAC"><svg><use href="#i-cac"/></svg></button></div>
  </div><h2>Utilitaires</h2></div>
  <div class="group"><div class="cmds">
    <button class="on"><svg><use href="#i-hatch"/></svg>Mode<span>hachurage</span></button>
    <button class="on"><svg><use href="#i-fill"/></svg>Mode<span>remplissage</span></button>
    <button class="on"><svg><use href="#i-imgmode"/></svg>Mode<span>image</span></button>
    <button class="on"><svg><use href="#i-guide"/></svg>Mode lignes<span>d'aide</span></button>
    <button><svg><use href="#i-fan"/></svg>Visibilité<span>Render</span></button>
    <button><svg><use href="#i-grid"/></svg>Grille<span>d'écran</span></button>
    <button><svg><use href="#i-info"/></svg>info<span>navigation</span></button>
    <button class="small" aria-label="Pause"><svg><use href="#i-pause"/></svg></button>
  </div><h2>Statut</h2></div>
  <div class="group"><div class="cmds">
    <button><svg><use href="#i-stretch"/></svg>Etirer<b class="caret"></b></button>
    <button><svg><use href="#i-move"/></svg>Déplacer<b class="caret"></b></button>
    <button><svg><use href="#i-copy2"/></svg>Copier<b class="caret"></b></button>
    <button><svg><use href="#i-offset"/></svg>Décalage<b class="caret"></b></button>
    <button><svg><use href="#i-rotate"/></svg>Rotation<b class="caret"></b></button>
    <button><svg><use href="#i-mirror"/></svg>Mirroir<b class="caret"></b></button>
    <button><svg><use href="#i-scale"/></svg>Echelle<b class="caret"></b></button>
    <button><svg><use href="#i-align"/></svg>Aligner<b class="caret"></b></button>
    <button><svg><use href="#i-explode"/></svg>Exploser</button>
    <button><svg><use href="#i-trash"/></svg>Supprimer<b class="caret"></b></button>
  </div><h2>Transformer</h2></div>
</section>

<main>
  <aside class="side">
    <button aria-label="Extrémité"><svg><use href="#i-endpt"/></svg></button>
    <button aria-label="Milieu"><svg><use href="#i-midpt"/></svg></button>
    <button aria-label="Entre deux points"><svg><use href="#i-between"/></svg></button>
    <button aria-label="Intersection"><svg><use href="#i-cross"/></svg></button>
    <button class="lettered"><em>d</em><svg><use href="#i-dot"/></svg></button>
    <button aria-label="Perpendiculaire"><svg><use href="#i-tee"/></svg></button>
    <button aria-label="Tangente"><svg><use href="#i-tanarc"/></svg></button>
    <button class="lettered"><em>X</em><svg><use href="#i-dot"/></svg></button>
    <button class="lettered"><em>Y</em><svg><use href="#i-dot"/></svg></button>
    <button class="lettered"><em>Z</em><svg><use href="#i-dot"/></svg></button>
    <button aria-label="Repère"><svg><use href="#i-axis"/></svg></button><hr>
    <button aria-label="Hauteur"><svg><use href="#i-height"/></svg></button><hr>
    <button aria-label="Plan supérieur"><svg><use href="#i-ctopo"/></svg></button>
    <button aria-label="Plan de face"><svg><use href="#i-cfronto"/></svg></button>
    <button aria-label="Plan gauche"><svg><use href="#i-clefto"/></svg></button>
    <footer></footer>
  </aside>

  <section class="work">
    <div class="canvas">
      <svg class="ucs" viewBox="0 0 74 80"><path d="M5.500 18v59.500H65" stroke="#111"/><text x="7" y="14">y</text><text x="7" y="73" class="red">z</text><text x="65" y="73">x</text></svg>
      <svg class="pointer" viewBox="0 0 12 20"><path d="M1 1v15l3-3 3 6 2-1-3-6h5z" fill="#fff" stroke="#444"/></svg>
      <svg class="origin" viewBox="0 0 14 14"><path d="M7 0v14M1 7h12M3 3l8 8M11 3l-8 8" stroke="#000"/></svg>
    </div>
    <div class="cmdline">
      <select id="cmd" class="combo"><option></option></select>
      <label for="cmd">Entrez la(les) commande(s):</label>
      <output class="w60">Tous</output>
      <div class="assign">
        <div class="picker"><input aria-label="Calque courant" value="New Layer 1"><button>...</button></div>
        <button class="put" aria-label="Affecter au calque"><svg><use href="#i-putlayer"/></svg></button>
      </div>
      <output class="w76">TSC 100</output>
      <output class="w60">1.123 m</output>
    </div>
  </section>

  <aside class="side">
    <button aria-label="Zoom fenêtre"><svg><use href="#i-zwin"/></svg></button>
    <button aria-label="Zoom avant"><svg><use href="#i-zin"/></svg></button>
    <button aria-label="Zoom arrière"><svg><use href="#i-zout"/></svg></button>
    <button aria-label="Zoom étendu"><svg><use href="#i-zall"/></svg></button>
    <button aria-label="Panoramique"><svg><use href="#i-hand"/></svg></button>
    <button aria-label="Vue précédente"><svg><use href="#i-back"/></svg></button>
    <button aria-label="Vue suivante"><svg><use href="#i-fwd"/></svg></button>
    <button aria-label="Dessus"><svg><use href="#i-ctop"/></svg></button>
    <button aria-label="Face"><svg><use href="#i-cfront"/></svg></button>
    <button aria-label="Arrière"><svg><use href="#i-cback"/></svg></button>
    <button aria-label="Droite"><svg><use href="#i-cright"/></svg></button>
    <button aria-label="Gauche"><svg><use href="#i-cleft"/></svg></button>
    <button aria-label="Axonométrie"><svg><use href="#i-caxis"/></svg></button>
    <button aria-label="Régénérer"><svg><use href="#i-brushpage"/></svg></button>
    <footer></footer>
  </aside>
  <aside class="side broad">
    <button class="on" aria-label="Truelle"><svg><use href="#i-trowel"/></svg></button>
    <button aria-label="Solide"><svg><use href="#i-solid"/></svg></button>
    <button aria-label="Mixte"><svg><use href="#i-mixed"/></svg></button>
    <button aria-label="Plan"><svg><use href="#i-viewport"/></svg></button><hr>
    <button aria-label="Info"><svg><use href="#i-info"/></svg></button><hr>
    <button class="on" aria-label="Mode hachurage"><svg><use href="#i-hatch"/></svg></button>
    <button class="on" aria-label="Mode remplissage"><svg><use href="#i-fill"/></svg></button>
    <button class="on" aria-label="Mode image"><svg><use href="#i-imgmode"/></svg></button>
    <button class="on" aria-label="Mode lignes d'aide"><svg><use href="#i-guide"/></svg></button>
    <button aria-label="Visibilité Render"><svg><use href="#i-fan"/></svg></button><hr>
    <button class="on" aria-label="2D"><svg><use href="#i-2d"/></svg></button>
    <button aria-label="3D"><svg><use href="#i-3d"/></svg></button><hr>
    <button class="on" aria-label="Maison"><svg><use href="#i-home"/></svg></button>
    <button aria-label="Perspective"><svg><use href="#i-home2"/></svg></button><hr>
    <button aria-label="Style"><svg><use href="#i-brushpage"/></svg></button><hr>
    <button aria-label="Vues"><svg><use href="#i-cam"/></svg></button>
    <button aria-label="Bâtiment"><svg><use href="#i-house"/></svg></button><hr>
    <button class="split" aria-label="Repère"><svg><use href="#i-ucs"/></svg><b class="caret"></b></button>
    <footer></footer>
  </aside>
</main>

<div class="dock">
  <form class="bar coords">
    <button type="button" class="sq">Δ</button>
    <label for="cx">X</label><button type="button" class="sq" aria-label="Verrouiller X"><svg><use href="#i-lock"/></svg></button><input id="cx" value="34.465">
    <label for="cy">Y</label><button type="button" class="sq" aria-label="Verrouiller Y"><svg><use href="#i-lock"/></svg></button><input id="cy" value="22.624">
    <label for="cz">Z</label><button type="button" class="sq" aria-label="Verrouiller Z"><svg><use href="#i-lock"/></svg></button><input id="cz" value="0.000" class="dim">
    <label for="cl" class="slim">L</label><input id="cl" value="41.228" class="short">
    <label for="ca" class="slim">A</label><input id="ca" value="33.28" class="short">
    <select class="combo first" aria-label="Échelle"><option>1:100.00</option></select>
    <select class="combo" aria-label="Unités"><option>Meters</option></select>
    <select class="combo" aria-label="Mode échelle"><option>Scale off</option></select>
    <button type="button" class="more" aria-label="Plus"></button>
  </form>
  <form class="bar props">
    <button type="button" class="tool" aria-label="Pipette"><svg><use href="#i-dropper"/></svg></button><i></i>
    <div class="pick"><select class="combo pen" aria-label="Plume"><option>1</option></select><span class="swatch"></span></div>
    <div class="pick"><select class="combo" aria-label="Type de ligne"><option></option></select><span class="rule"></span></div>
    <div class="pick"><select class="combo" aria-label="Épaisseur"><option></option></select><span class="rule"></span></div>
    <button type="button" class="tool" aria-label="Style de ligne"><svg><use href="#i-linebrush"/></svg></button>
    <div class="pick"><select class="combo" aria-label="Hachure"><option></option></select><span class="frame"><svg viewBox="0 0 8 8"><path d="M0 0l8 8M8 0 0 8" stroke="#333"/></svg></span></div>
    <button type="button" class="black" aria-label="Couleur"></button>
    <button type="button" class="tool" aria-label="Remplir"><svg><use href="#i-bucket"/></svg></button>
    <button type="button" class="more" aria-label="Plus"></button>
  </form>
  <div class="bar snaps">
    <button class="on" aria-label="Accrochage"><svg><use href="#i-magnet"/></svg></button>
    <button aria-label="Sans accrochage"><svg><use href="#i-magoff"/></svg></button>
    <button class="on" aria-label="Extrémité"><svg><use href="#i-send"/></svg></button>
    <button class="on" aria-label="Milieu"><svg><use href="#i-smid"/></svg></button>
    <button class="on" aria-label="Intersection"><svg><use href="#i-sint"/></svg></button>
    <button class="on" aria-label="Proche"><svg><use href="#i-snear"/></svg></button>
    <button class="on" aria-label="Centre"><svg><use href="#i-scen"/></svg></button>
    <button class="on" aria-label="Perpendiculaire"><svg><use href="#i-sperp"/></svg></button>
    <button class="on" aria-label="Tangente"><svg><use href="#i-stan"/></svg></button>
    <button class="on" aria-label="Insertion"><svg><use href="#i-schair"/></svg></button>
    <button aria-label="Réglages"><svg><use href="#i-maggear"/></svg></button>
    <button class="more" aria-label="Plus"></button>
  </div>
  <form class="bar layer">
    <div class="picker"><input aria-label="Calque" value="New Layer 1"><button type="button">...</button></div>
    <button type="button" class="more double" aria-label="Plus"></button>
  </form>
</div>
</body>
</html>
```
FILE: styles.css
```css
* { box-sizing: border-box; }
html, body { height: 100%; }
body {
  margin: 0;
  display: flex;
  flex-direction: column;
  background: #bfdbff;
  color: #27437c;
  font: 11px/13px "Noto Sans", "Open Sans", sans-serif;
  overflow: hidden;
}
button, input, select { font: inherit; color: inherit; margin: 0; border-radius: 0; }
button { background: none; border: 0; padding: 0; }
svg { fill: none; display: block; }
.sprite { display: none; }
h1, h2 { margin: 0; font-weight: normal; }

.on {
  background: linear-gradient(#f0c9a6, #f9b877 35%, #ff9f3c 42%, #ffc05c 70%, #ffee9c);
  box-shadow: inset 0 0 0 1px #c9a257;
}
.side .on, .snaps .on { background: linear-gradient(#eebf94, #fbc888 38%, #ffb55c 48%, #ffd585 75%, #ffeeb0); }
.caret {
  display: inline-block;
  border: 3px solid transparent;
  border-top-color: #56657f;
  border-bottom: 0;
}

/* title bar */
.titlebar {
  display: grid;
  grid-template-columns: 1fr auto 1fr;
  align-items: center;
  height: 26px;
  background: linear-gradient(#d3e4fb, #c8dcf8 30%, #d6e5fb 35%, #e2edff);
  border-bottom: 1px solid #aac9ef;
}
.titlebar h1 { font-size: 12px; color: #76828f; }
.qat {
  position: relative;
  display: flex;
  align-items: center;
  justify-self: start;
  height: 23px;
  padding: 0 14px 0 51px;
  border: 1px solid #a3c0e6;
  border-left: 0;
  border-radius: 0 12px 12px 0;
  background: linear-gradient(#dbe9fb, #c6daf5);
}
.qat::after {
  content: "";
  position: absolute;
  left: calc(100% + 8px);
  top: 8px;
  border: 3px solid transparent;
  border-top-color: #34435e;
  border-bottom: 0;
  box-shadow: 0 -3px 0 -2px #34435e;
}
.qat button { width: 23px; height: 22px; display: flex; align-items: center; justify-content: center; }
.qat button svg { width: 16px; height: 16px; }
.qat .on svg { width: 18px; height: 18px; }
.qat i { width: 2px; height: 18px; margin: 0 2px; border-left: 1px solid #a9c3e4; border-right: 1px solid #f0f6ff; }
.qat .mode { width: auto; padding: 0 0 0 4px; gap: 3px; font-size: 12px; }
.qat .drop { width: 10px; }
.qat .logo { position: absolute; left: 5px; top: 3px; width: 38px; height: 38px; z-index: 2; }
.qat .logo svg { width: 38px; height: 38px; }
.winbtns { display: flex; gap: 10px; justify-self: end; padding: 0 6px 4px 0; }
.winbtns svg { width: 12px; height: 12px; }

/* tabs */
.tabs { display: flex; gap: 6px; align-items: end; height: 27px; padding: 0 5px 0 55px; }
.tabs a { height: 25px; padding: 0 12px; line-height: 25px; color: #27437c; text-decoration: none; white-space: nowrap; }
.tabs .active { background: linear-gradient(#f4f9ff, #e2ecfa); border: 1px solid #8db2e3; border-bottom: 0; border-radius: 3px 3px 0 0; padding: 0 10px 0 11px; line-height: 23px; }
.tabs .about { margin-left: auto; padding: 0; }

/* ribbon */
.ribbon {
  display: flex;
  gap: 4px;
  height: 93px;
  margin: 0 3px 4px 2px;
  padding: 2px 2px 3px;
  border: 1px solid #8db2e3;
  border-radius: 4px;
  background: linear-gradient(#dfeafa, #cddcf0 18%, #c6d7ed 20%, #e1f1fd);
  box-shadow: 0 2px 1px #8fb4de;
}
.group {
  display: flex;
  flex-direction: column;
  border: 1px solid #b3cbe8;
  border-radius: 3px;
  background: linear-gradient(#dfe9f7, #d0ddef 18%, #c8d8ed 20%, #dbe8f7);
  box-shadow: 1px 1px 0 #eef5fe;
  overflow: hidden;
}
.group h2 { height: 15px; line-height: 15px; font-size: 11px; text-align: center; background: #c2d8f1; color: #4a70ae; }
.cmds { flex: 1; display: flex; padding: 0 2px; }
.cmds > button {
  display: flex;
  flex-direction: column;
  align-items: center;
  min-width: 42px;
  padding: 2px 3px 0;
  white-space: nowrap;
}
.cmds > button > svg { width: 32px; height: 32px; margin-bottom: 6px; }
.cmds > button > .caret { margin-top: 8px; }
.cmds span .caret { margin: 0 0 3px 3px; }
.cmds > .wide { min-width: 50px; }
.cmds > .small { min-width: 22px; }
.cmds > .small svg { width: 14px; height: 14px; margin-top: 2px; }
.mini { display: flex; flex-direction: column; justify-content: space-around; padding: 0 3px; }
.mini svg { width: 18px; height: 18px; }
.ruled { margin-left: 1px; padding: 0 5px; border-left: 1px solid #b3cbe8; }

/* work area */
main { flex: 1; display: flex; align-items: flex-start; min-height: 0; padding-right: 1px; }
.side {
  display: flex;
  flex-direction: column;
  width: 42px;
  border: 1px solid #94b8e5;
  border-radius: 3px;
  background: linear-gradient(90deg, #e4edfa, #d4e1f4 50%, #dbf0fb);
}
.side::before {
  content: "";
  height: 2px;
  margin: 4px 3px;
  background: repeating-linear-gradient(90deg, #7391bf 0 2px, transparent 2px 4px);
}
.work ~ .side::before { margin: 3px; }
.side > button { display: flex; align-items: center; justify-content: center; height: 38px; margin: 0 1px; }
.side > button > svg { width: 32px; height: 32px; }
.side hr { width: 32px; height: 1px; margin: 2px auto 3px; border: 0; background: #9dbce0; }
.side footer { height: 10px; background: #bdd4f0; border-radius: 0 0 3px 3px; }
.side footer::after {
  content: "";
  display: block;
  width: 0;
  margin: 2px 2px 0 auto;
  border: 3px solid transparent;
  border-left-color: #253c63;
  border-right: 0;
}
.broad { width: 53px; }
.broad > button { margin: 0 7px; }
.broad hr { width: 41px; }
.broad .split { margin: 0 0 0 4px; justify-content: space-between; padding-right: 4px; }
.lettered { position: relative; }
.lettered em { position: absolute; left: 10px; top: 4px; font: bold 12px/14px "Noto Sans", sans-serif; color: #1e659d; }

.work { flex: 1; align-self: stretch; display: flex; flex-direction: column; margin: 0 1px; background: #efefef; }
.canvas { position: relative; flex: 1; background: #fff; border: 1px solid #e0e0e0; border-top: 3px solid #7c7c7c; border-left: 3px solid #7c7c7c; }
.ucs { position: absolute; right: 12px; top: 1px; width: 74px; height: 80px; }
.ucs text { font: bold 13px "DejaVu Sans", sans-serif; fill: #111; }
.ucs .red { fill: #d81c2c; }
.pointer { position: absolute; left: 58%; top: 117px; width: 12px; height: 20px; margin-left: -3px; }
.origin { position: absolute; left: 43px; bottom: 42px; width: 14px; height: 14px; }
.cmdline { display: flex; align-items: center; gap: 7px; height: 34px; padding: 2px 9px 0 3px; border-top: 2px solid #fff; border-bottom: 1px solid #a0a0a0; color: #000; font-family: "Liberation Sans", Arial, sans-serif; }
.cmdline label { margin-right: auto; }
.cmdline .combo { width: 290px; height: 20px; }
.cmdline output { height: 21px; padding: 2px; border: 2px solid; border-color: #8a8a8a #fff #fff #8a8a8a; }
.assign { display: flex; gap: 2px; }
.w60 { width: 62px; }
.w76 { width: 78px; }

.combo {
  appearance: none;
  flex: none;
  width: 98px;
  height: 23px;
  padding: 0 20px 0 3px;
  border: 2px solid;
  border-color: #6f6f6f #f4f4f4 #f4f4f4 #6f6f6f;
  color: #000;
  background: #fff url("data:image/svg+xml,%3Csvg xmlns='http://www.w3.org/2000/svg' width='16' height='20'%3E%3Cpath fill='%23e3e3e3' stroke='%23909090' d='M.5-1h15v20.500H.5z'/%3E%3Cpath d='M5 8h7l-3.500 4z'/%3E%3C/svg%3E") right center no-repeat;
}
.picker { display: flex; width: 163px; height: 22px; background: #fff; border: 2px solid; border-color: #6f6f6f #f4f4f4 #f4f4f4 #6f6f6f; }
.picker input { flex: 1; min-width: 0; border: 0; padding: 0 0 2px; background: none; color: #000; }
.picker button { width: 17px; background: #ececec; color: #000; border: 1px solid; border-color: #fff #666 #666 #fff; }
.put, .sq { background: #dcdcdc; border: 1px solid; border-color: #fff #777 #777 #fff; }
.put { width: 21px; height: 21px; padding: 1px; }
.put svg { width: 17px; height: 16px; }

/* bottom dock */
.dock { display: flex; gap: 5px; height: 42px; padding: 0 2px; color: #000; font-family: "Liberation Sans", Arial, sans-serif; }
.bar {
  position: relative;
  display: flex;
  align-items: center;
  padding: 0 11px 0 8px;
  border: 1px solid #7ba7dc;
  border-radius: 3px;
  background: linear-gradient(#e6f0fd, #d6e4f7 50%, #d3e9fb);
}
.bar::before {
  content: "";
  position: absolute;
  left: 4px;
  top: 6px;
  bottom: 6px;
  width: 2px;
  background: repeating-linear-gradient(#7391bf 0 2px, transparent 2px 4px);
}
.more { position: absolute; right: 0; top: 0; bottom: 0; width: 9px; background: #bdd4f0; }
.more::after, .double::before { content: ""; position: absolute; left: 1px; bottom: 4px; border: 3px solid transparent; border-top-color: #253c63; border-bottom: 0; }
.double::before { bottom: auto; top: 4px; }
.coords { width: 751px; gap: 1px; font-weight: bold; font-size: 14px; background: #c6dbf8; }
.coords label { width: 13px; text-align: center; font-weight: normal; font-size: 16px; color: #1b2a5a; }
.coords .slim { width: 10px; }
.coords input { width: 56px; height: 21px; padding: 0 1px; border: 2px solid; border-color: #6f6f6f #f4f4f4 #f4f4f4 #6f6f6f; background: #fff; color: #000; }
.coords .short { width: 50px; }
.coords .dim { background: #efefef; }
.coords .combo { margin-left: 6px; }
.coords .first { margin-left: 11px; }
.sq { width: 16px; height: 18px; font-size: 12px; font-weight: normal; }
.sq svg { width: 14px; height: 14px; }
.props { width: 563px; padding-left: 10px; gap: 3px; }
.tool svg { width: 32px; height: 32px; }
.props i { height: 34px; margin-right: 1px; border-left: 1px solid #a9c3e4; }
.pick { position: relative; display: flex; }
.pick .pen { padding-left: 20px; font-size: 14px; }
.pick span { position: absolute; pointer-events: none; }
.swatch { left: 4px; top: 4px; width: 15px; height: 15px; background: #000; }
.rule { left: 3px; right: 19px; top: 11px; height: 1px; background: #000; }
.frame { left: 4px; right: 20px; top: 4px; height: 15px; border: 1px solid #000; display: flex; align-items: center; justify-content: center; }
.frame svg { width: 8px; height: 8px; }
.black { width: 21px; height: 22px; margin-right: 2px; background: #000; }
.snaps { width: 437px; padding-left: 6px; gap: 1px; }
.snaps > button:not(.more) { width: 37px; height: 38px; display: flex; align-items: center; justify-content: center; }
.snaps svg { width: 32px; height: 32px; }
.layer { flex: 1; font-size: 11px; }
.layer .picker { width: 96px; }
```
